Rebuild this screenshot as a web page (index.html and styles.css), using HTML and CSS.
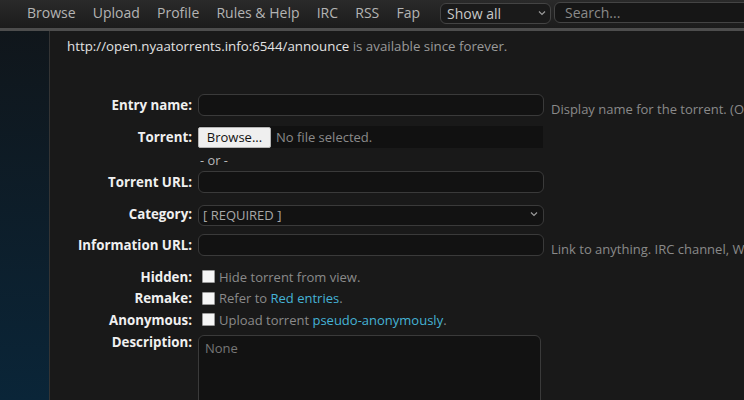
FILE: index.html
```html
<!DOCTYPE html>
<html lang="en">
<head>
<meta charset="utf-8">
<title>Upload</title>
<link rel="stylesheet" href="styles.css">
</head>
<body>
<header class="nav">
  <a class="nav-link" href="#">Browse</a>
  <a class="nav-link" href="#">Upload</a>
  <a class="nav-link" href="#">Profile</a>
  <a class="nav-link" href="#">Rules &amp; Help</a>
  <a class="nav-link" href="#">IRC</a>
  <a class="nav-link" href="#">RSS</a>
  <a class="nav-link nav-last" href="#">Fap</a>
  <div class="nav-select-wrap">
    <select class="nav-select"><option>Show all</option></select>
    <svg class="chev" width="8" height="6" viewBox="0 0 8 6"><path d="M1 1.5 L4 4.5 L7 1.5" fill="none" stroke="#9a9a9a" stroke-width="1.2"/></svg>
  </div>
  <input class="nav-search" type="text" placeholder="Search...">
</header>
<div class="page">
  <aside class="side"></aside>
  <main class="main">
    <p class="announce"><span class="tracker">http://open.nyaatorrents.info:6544/announce</span> is available since forever.</p>
    <form class="form">
      <div class="row r-entry">
        <label class="lbl">Entry name:</label>
        <input class="field" type="text">
        <span class="hint">Display name for the torrent. (Optional if uploading a file)</span>
      </div>
      <div class="row r-torrent">
        <label class="lbl">Torrent:</label>
        <div class="file"><button type="button" class="browse">Browse...</button><span class="nofile">No file selected.</span></div>
      </div>
      <div class="row r-or">
        <span></span>
        <span class="or">- or -</span>
      </div>
      <div class="row r-url">
        <label class="lbl">Torrent URL:</label>
        <input class="field" type="text">
      </div>
      <div class="row r-cat">
        <label class="lbl">Category:</label>
        <div class="sel-wrap">
          <select class="field sel"><option>[ REQUIRED ]</option></select>
          <svg class="chev chev-cat" width="8" height="6" viewBox="0 0 8 6"><path d="M1 1.5 L4 4.5 L7 1.5" fill="none" stroke="#9a9a9a" stroke-width="1.2"/></svg>
        </div>
      </div>
      <div class="row r-info">
        <label class="lbl">Information URL:</label>
        <input class="field" type="text">
        <span class="hint">Link to anything. IRC channel, Website, etc.</span>
      </div>
      <div class="row r-check r-first">
        <label class="lbl">Hidden:</label>
        <span class="check"><input type="checkbox" class="cb"><span class="ctext">Hide torrent from view.</span></span>
      </div>
      <div class="row r-check">
        <label class="lbl">Remake:</label>
        <span class="check"><input type="checkbox" class="cb"><span class="ctext">Refer to <a class="lnk" href="#">Red entries</a>.</span></span>
      </div>
      <div class="row r-check">
        <label class="lbl">Anonymous:</label>
        <span class="check"><input type="checkbox" class="cb"><span class="ctext">Upload torrent <a class="lnk" href="#">pseudo-anonymously</a>.</span></span>
      </div>
      <div class="row r-desc">
        <label class="lbl lbl-desc">Description:</label>
        <textarea class="area" placeholder="None"></textarea>
        <span class="hint hint-desc">Markdown is supported. Bold text will be rendered.</span>
      </div>
    </form>
  </main>
</div>
</body>
</html>
```
FILE: styles.css
```css
* { box-sizing: border-box; }
html, body {
  margin: 0;
  height: 100%;
  overflow: hidden;
  background: #191919;
  font-family: "Open Sans", "Noto Sans", sans-serif;
}
.nav {
  height: 31px;
  display: flex;
  align-items: center;
  padding: 0 0 3px 27px;
  background: linear-gradient(#2a2a2a, #1c1c1c);
  border-bottom: 3px solid #4d4d4d;
  white-space: nowrap;
}
.nav-link {
  color: #b4b4b4;
  text-decoration: none;
  font-size: 14px;
  margin-right: 17.2px;
}
.nav-last { margin-right: 20px; }
.nav-select-wrap {
  position: relative;
  width: 111px;
  height: 21px;
  flex: none;
}
.nav-select {
  appearance: none;
  -webkit-appearance: none;
  width: 100%;
  height: 100%;
  background: #1a1a1a;
  border: 1px solid #444;
  border-radius: 6px;
  color: #c8c8c8;
  font-family: inherit;
  font-size: 14px;
  padding: 0 0 0 6px;
  line-height: 19px;
}
.chev {
  position: absolute;
  right: 5px;
  top: 8px;
  pointer-events: none;
}
.nav-search {
  margin-left: 3px;
  width: 200px;
  height: 21px;
  flex: none;
  background: #161616;
  border: 1px solid #444;
  border-radius: 6px 0 0 6px;
  color: #ccc;
  font-family: inherit;
  font-size: 14px;
  padding: 0 5px 0 10px;
}
.nav-search::placeholder { color: #8a8a8a; }

.page {
  display: flex;
  height: calc(100% - 31px);
}
.side {
  width: 50px;
  flex: none;
  background: linear-gradient(#10161b, #0a2538);
  border-right: 1px solid #343434;
}
.main {
  flex: 1;
  min-width: 0;
  overflow: hidden;
  padding-left: 17px;
}
.announce {
  margin: 6px 0 0;
  font-size: 13.3px;
  line-height: 18px;
  color: #9a9a9a;
  white-space: nowrap;
}
.tracker { color: #e2e2e2; }

.form {
  margin-top: 39px;
}
.row {
  display: grid;
  grid-template-columns: 125px 346px max-content;
  column-gap: 6px;
  align-items: center;
  white-space: nowrap;
}
.lbl {
  text-align: right;
  font-weight: bold;
  font-size: 13.3px;
  color: #f0f0f0;
  line-height: 16px;
}
.field {
  height: 22px;
  width: 346px;
  background: #121212;
  border: 1px solid #3a3a3a;
  border-radius: 6px;
  color: #ccc;
  font-family: inherit;
  font-size: 13px;
}
.hint {
  margin-left: 1px;
  align-self: end;
  font-size: 13px;
  line-height: 18px;
  color: #8a8a8a;
  margin-bottom: -2px;
}
.r-torrent { margin-top: 10px; }
.file {
  height: 22px;
  width: 345px;
  background: #111;
  display: flex;
  align-items: center;
}
.browse {
  height: 21px;
  width: 73px;
  flex: none;
  background: #efefef;
  border: 1px solid #b5b5b5;
  border-radius: 2px;
  color: #111;
  font-family: inherit;
  font-size: 13px;
  padding: 0;
}
.nofile {
  margin-left: 5px;
  font-size: 13px;
  color: #8a8a8a;
}
.r-or { margin-top: 4px; }
.or {
  font-size: 12.8px;
  line-height: 16px;
  color: #b8b8b8;
  padding-left: 2px;
}
.r-url { margin-top: 3px; }
.r-cat { margin-top: 10px; }
.sel-wrap { position: relative; width: 346px; height: 21px; }
.sel {
  appearance: none;
  -webkit-appearance: none;
  height: 21px;
  color: #a8a8a8;
  padding: 0 0 0 4px;
  font-size: 13px;
}
.chev-cat { right: 6px; top: 8px; }
.r-info { margin-top: 10px; }
.r-check { height: 21.5px; }
.r-first { margin-top: 10px; }
.check {
  display: flex;
  align-items: center;
}
.cb {
  appearance: none;
  -webkit-appearance: none;
  width: 13px;
  height: 13px;
  margin: 0 4px 0 4px;
  background: #f6f6f6;
  border: 1px solid #9a9a9a;
  border-radius: 1px;
}
.ctext {
  font-size: 13px;
  line-height: 16px;
  color: #8a8a8a;
}
.lnk { color: #45b3d6; text-decoration: none; }
.r-desc {
  margin-top: 4px;
  align-items: start;
}
.lbl-desc { margin-top: -1px; }
.area {
  width: 343px;
  height: 83px;
  background: #121212;
  border: 1px solid #3a3a3a;
  border-radius: 6px;
  color: #ccc;
  font-family: inherit;
  font-size: 13px;
  padding: 3px 6px;
  resize: none;
}
.area::placeholder { color: #777; }
.hint-desc { margin-left: 4px; margin-bottom: -4px; }
```
